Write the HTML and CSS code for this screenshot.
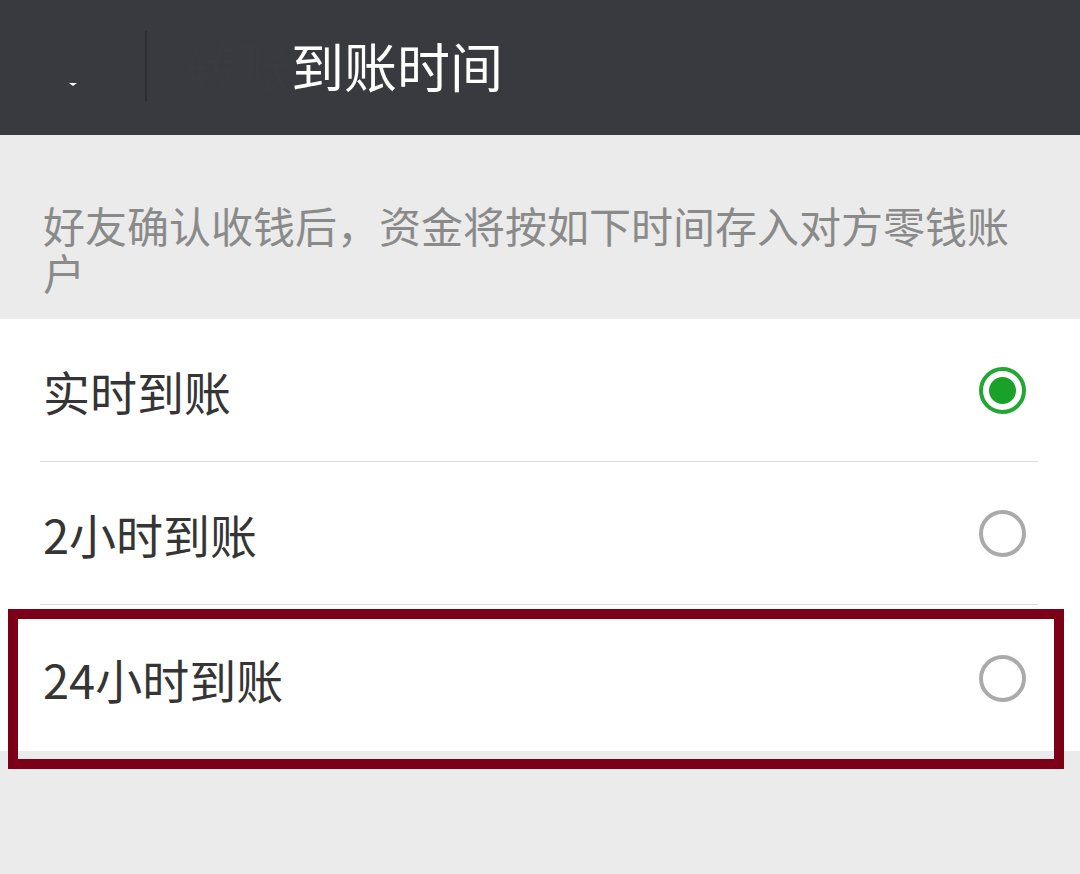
FILE: index.html
```html
<!DOCTYPE html>
<html lang="zh">
<head>
<meta charset="utf-8">
<title>到账时间</title>
<link rel="stylesheet" href="styles.css">
</head>
<body>
<header class="topbar">
  <div class="back">
    <svg width="20" height="12" viewBox="0 0 20 12"><path d="M6 4 L10 7 L14 4 Z" fill="#ffffff"/></svg>
  </div>
  <div class="vline"></div>
  <h1 class="title"><span class="hidden-chars">转账</span>到账时间</h1>
</header>
<p class="desc">好友确认收钱后，资金将按如下时间存入对方零钱账户</p>
<ul class="options">
  <li class="option"><span class="label">实时到账</span><span class="radio checked"></span></li>
  <li class="option"><span class="label">2小时到账</span><span class="radio"></span></li>
  <li class="option"><span class="label">24小时到账</span><span class="radio"></span></li>
</ul>
<div class="highlight"></div>
</body>
</html>
```

FILE: styles.css
```css
html, body {
  margin: 0;
  padding: 0;
}
body {
  background: #ebebeb;
  font-family: "Noto Sans CJK SC", "Noto Sans", sans-serif;
  width: 1080px;
  height: 874px;
  overflow: hidden;
  position: relative;
}
.topbar {
  height: 135px;
  background: #393a3f;
  display: flex;
  align-items: center;
}
.back {
  width: 145px;
  height: 135px;
  display: flex;
  align-items: flex-end;
  justify-content: center;
  box-sizing: border-box;
  padding: 0 0 44px 0;
}
.vline {
  width: 2px;
  height: 70px;
  background: #2c2d31;
  margin-top: -3px;
}
.title {
  margin: 0 0 0 38px;
  color: #ffffff;
  font-size: 53px;
  font-weight: 400;
  line-height: 1;
  padding-bottom: 4px;
}
.hidden-chars {
  color: #3a3b40;
}
.desc {
  margin: 0;
  padding: 66px 60px 24px 43px;
  color: #8a8a8a;
  font-size: 42px;
  line-height: 47px;
}
.options {
  list-style: none;
  margin: 0;
  padding: 0;
  background: #ffffff;
}
.option {
  height: 143px;
  display: flex;
  align-items: center;
  justify-content: space-between;
  margin-left: 40px;
  margin-right: 42px;
  padding-left: 3px;
  border-bottom: 1px solid #dcdcdc;
  box-sizing: border-box;
}
.option:last-child {
  border-bottom: none;
  height: 146px;
}
.label {
  font-size: 47px;
  color: #353535;
  line-height: 1;
}
.radio {
  width: 47px;
  height: 47px;
  border-radius: 50%;
  border: 4px solid #aaaaaa;
  box-sizing: border-box;
  margin-right: 12px;
  display: flex;
  align-items: center;
  justify-content: center;
}
.radio.checked {
  border-color: #22a634;
}
.radio.checked::after {
  content: "";
  width: 27px;
  height: 27px;
  border-radius: 50%;
  background: #1aa12a;
}
.highlight {
  position: absolute;
  left: 8px;
  top: 609px;
  width: 1056px;
  height: 160px;
  box-sizing: border-box;
  border: 10px solid #7d0019;
}
```
